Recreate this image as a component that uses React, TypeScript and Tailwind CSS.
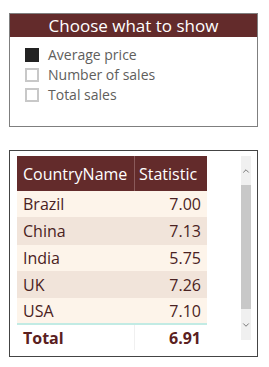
import { ChevronDown, ChevronUp } from 'lucide-react';

const rows = [
  { country: 'Brazil', value: '7.00', h: 'h-[26px]' },
  { country: 'China', value: '7.13', h: 'h-[28px]' },
  { country: 'India', value: '5.75', h: 'h-[26px]' },
  { country: 'UK', value: '7.26', h: 'h-[27px]' },
  { country: 'USA', value: '7.10', h: 'h-[25px]' },
];

const options = [
  { label: 'Average price', checked: true },
  { label: 'Number of sales', checked: false },
  { label: 'Total sales', checked: false },
];

function Slicer() {
  return (
    <div className="ml-[9px] mt-[13px] w-[249px] h-[114px] border border-[#7f7f7f] bg-white">
      <div className="h-[23px] bg-[#632b2b] text-white text-[17px] leading-[23px] text-center">
        Choose what to show
      </div>
      <div className="flex flex-col gap-[6px] pl-[15px] pt-[11px]">
        {options.map((o) => (
          <div key={o.label} className="flex items-center gap-[9px] h-[14px]">
            {o.checked ? (
              <span className="w-[14px] h-[14px] bg-[#222222]" />
            ) : (
              <span className="w-[14px] h-[14px] border-2 border-[#c8c8c8] bg-white" />
            )}
            <span className="text-[14px] text-[#605e5c] leading-none">{o.label}</span>
          </div>
        ))}
      </div>
    </div>
  );
}

function StatTable() {
  return (
    <div className="ml-[9px] mt-[23px] w-[249px] h-[207px] border border-[#444444] bg-white flex pl-[7px] pt-[5px]">
      <div className="w-[190px]">
        <div className="flex h-[35px] bg-[#632b2b] text-white text-[16px] items-center">
          <div className="w-[118px] pl-[6px] h-full flex items-center border-r border-[#8a5a5a]">CountryName</div>
          <div className="flex-1 pl-[4px]">Statistic</div>
        </div>
        {rows.map((r, i) => (
          <div
            key={r.country}
            className={`flex items-center text-[16px] text-[#4a2222] ${r.h} ${
              i % 2 === 0 ? 'bg-[#fdf4ea]' : 'bg-[#f1e4da]'
            }`}
          >
            <div className="w-[118px] pl-[6px]">{r.country}</div>
            <div className="flex-1 text-right pr-[6px]">{r.value}</div>
          </div>
        ))}
        <div className="flex items-center h-[27px] border-t-2 border-[#c2ebe4] text-[16px] font-bold text-[#5a2020]">
          <div className="w-[118px] pl-[6px] h-full flex items-center border-r border-[#f0f0f0]">Total</div>
          <div className="flex-1 text-right pr-[6px]">6.91</div>
        </div>
      </div>
      {/* scrollbar */}
      <div className="ml-[34px] w-[10px] h-[184px] bg-[#f0f0f0] flex flex-col items-center">
        <div className="h-[29px] flex items-center justify-center text-[#606060]">
          <ChevronUp size={10} strokeWidth={2} />
        </div>
        <div className="w-full h-[124px] bg-[#c8c8c8]" />
        <div className="h-[31px] flex items-center justify-center text-[#606060]">
          <ChevronDown size={10} strokeWidth={2} />
        </div>
      </div>
    </div>
  );
}

export default function App() {
  return (
    <div className="w-[269px] h-[367px] bg-white overflow-hidden font-['Segoe_UI','Open_Sans',sans-serif]">
      <Slicer />
      <StatTable />
    </div>
  );
}
